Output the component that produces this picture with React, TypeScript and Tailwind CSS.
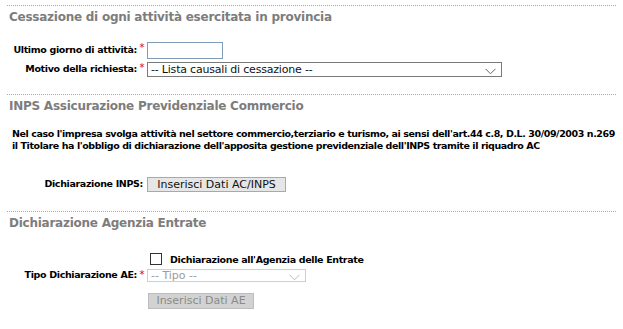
import React from "react";

const font = { fontFamily: '"DejaVu Sans", Verdana, sans-serif' };
const bold = "text-[9.5px] font-bold tracking-[-0.35px] whitespace-nowrap";

const Chevron = ({ color, top }: { color: string; top: string }) => (
  <svg width="11" height="7" viewBox="0 0 11 7" className={`absolute right-[5px] ${top} pointer-events-none`}>
    <path d="M0.5 0.8 L5.5 5.8 L10.5 0.8" fill="none" stroke={color} strokeWidth="1" />
  </svg>
);

const Star = () => (
  <span className="w-[10px] text-center text-[#e00000] text-[10px] leading-none self-start pt-[1px]">*</span>
);

const Heading = ({ children }: { children: React.ReactNode }) => (
  <h2 className="pt-[3px] pl-[2px] text-[12px] leading-[16px] font-bold tracking-[-0.25px] text-[#7d7d7d]">{children}</h2>
);

export default function App() {
  return (
    <div className="w-[623px] h-[329px] bg-white text-black overflow-hidden" style={font}>
      <div className="mx-[7px] pt-[5px]">
        {/* Cessazione */}
        <section className="border-t border-dotted border-[#a8a8a8]">
          <Heading>Cessazione di ogni attività esercitata in provincia</Heading>
          <div className="mt-[17px] flex flex-col gap-[3px]">
            <div className="flex items-center h-[17px]">
              <label className={`w-[130px] text-right ${bold}`}>Ultimo giorno di attività:</label>
              <Star />
              <input type="text" className="w-[76px] h-[17px] border border-[#7f9db9] bg-white outline-none" />
            </div>
            <div className="flex items-center h-[15px]">
              <label className={`w-[130px] text-right ${bold}`}>Motivo della richiesta:</label>
              <Star />
              <div className="relative w-[355px] h-[15px] border border-[#7a7a7a] bg-white">
                <div className="pl-[3px] text-[11px] leading-[13px] tracking-[-0.2px] text-[#111]">-- Lista causali di cessazione --</div>
                <Chevron color="#666" top="top-[5px]" />
              </div>
            </div>
          </div>
        </section>

        {/* INPS */}
        <section className="mt-[17px] border-t border-dotted border-[#a8a8a8]">
          <Heading>INPS Assicurazione Previdenziale Commercio</Heading>
          <p className="mt-[14px] pl-[5px] text-[9.5px] leading-[12px] font-bold tracking-[-0.42px] whitespace-nowrap">
            Nel caso l'impresa svolga attività nel settore commercio,terziario e turismo, ai sensi dell'art.44 c.8, D.L. 30/09/2003 n.269
            <br />
            il Titolare ha l'obbligo di dichiarazione dell'apposita gestione previdenziale dell'INPS tramite il riquadro AC
          </p>
          <div className="mt-[25px] flex items-center">
            <label className={`w-[136px] text-right ${bold}`}>Dichiarazione INPS:</label>
            <button className="ml-[4px] w-[139px] h-[15px] border border-[#a9a9a9] bg-[#e6e6e6] text-[11px] leading-[13px] text-[#111]">
              Inserisci Dati AC/INPS
            </button>
          </div>
        </section>

        {/* Agenzia Entrate */}
        <section className="mt-[19px] border-t border-dotted border-[#a8a8a8]">
          <Heading>Dichiarazione Agenzia Entrate</Heading>
          <div className="mt-[21px]">
            <div className="flex items-end h-[13px] pl-[143px]">
              <span className="w-[12px] h-[12px] border border-[#333] bg-white" />
              <span className={`ml-[8px] leading-[11px] ${bold}`}>Dichiarazione all'Agenzia delle Entrate</span>
            </div>
            <div className="mt-[4px] flex items-center h-[13px]">
              <label className={`w-[130px] text-right ${bold}`}>Tipo Dichiarazione AE:</label>
              <Star />
              <div className="relative w-[159px] h-[13px] border border-[#cfcfcf] bg-white">
                <div className="pl-[3px] text-[11px] leading-[11px] text-[#9a9a9a]">-- Tipo --</div>
                <Chevron color="#bbb" top="top-[4px]" />
              </div>
            </div>
            <div className="mt-[5px] pl-[141px]">
              <button disabled className="w-[106px] h-[16px] border border-[#bdbdbd] bg-[#d2d2d2] text-[11px] leading-[14px] text-[#8a8a8a]">
                Inserisci Dati AE
              </button>
            </div>
          </div>
        </section>

        <div className="mt-[22px] border-t border-dotted border-[#a8a8a8]" />
      </div>
    </div>
  );
}
